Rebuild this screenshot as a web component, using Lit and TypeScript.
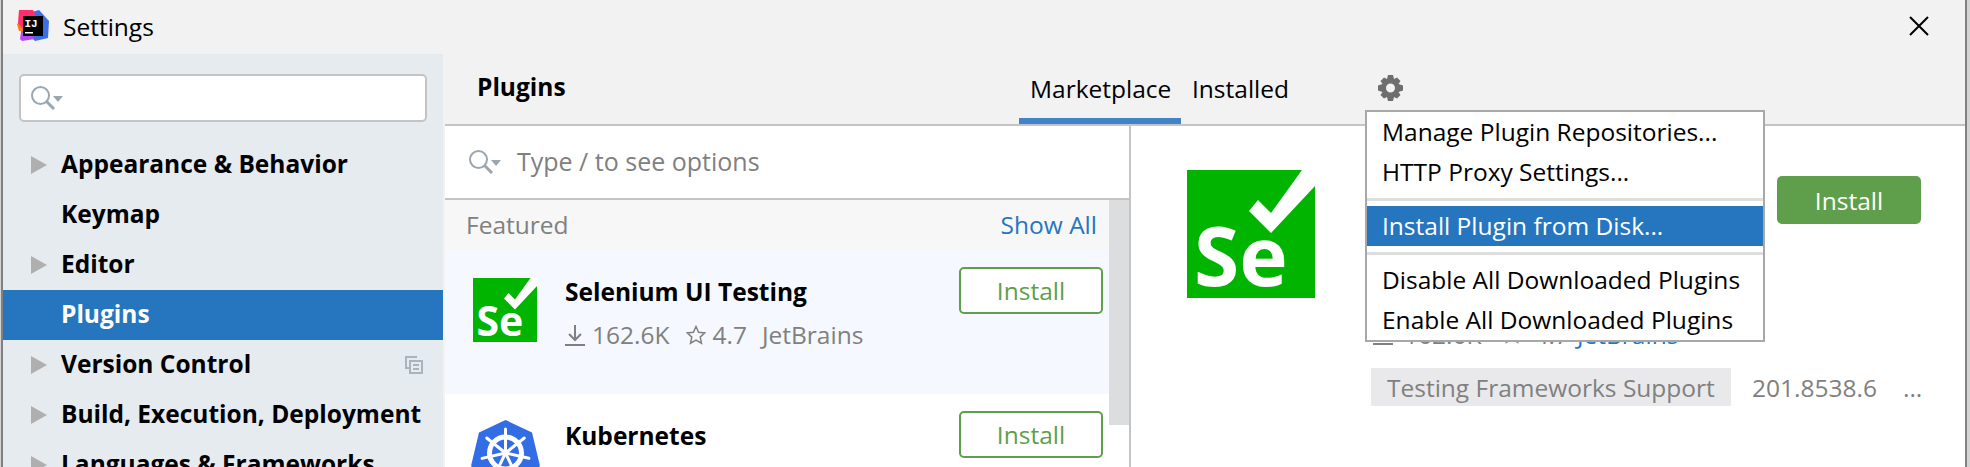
import { LitElement, html, css, svg } from 'lit';
import { customElement } from 'lit/decorators.js';

const seleniumIcon = (size: number) => html`
  <svg width=${size} height=${size} viewBox="0 0 128 128">
    <rect width="128" height="128" fill="#00b400"/>
    <path fill="#fff" d="M115 0h13v16L84 63 62 41l9-11 13 13z"/>
    <text x="7" y="116" font-size="82" font-weight="700" fill="#fff" font-family="Open Sans">Se</text>
  </svg>
`;

const k8sSpokes = [0, 51.4, 102.8, 154.3, 205.7, 257.1, 308.6];

const kubernetesIcon = html`
  <svg width="69" height="67" viewBox="0 0 69 67">
    <path fill="#326de6" d="M34.500 0 61 12.500 69 46 48 67H21L0 46 8 12.500z"/>
    <g fill="none" stroke="#fff">
      <circle cx="34.500" cy="33" r="16" stroke-width="5"/>
      ${k8sSpokes.map(
        (a) => svg`<path stroke-width="3" stroke-linecap="round" d="M34.500 33V9" transform="rotate(${a} 34.500 33)"/>`
      )}
    </g>
    <circle cx="34.500" cy="33" r="3" fill="#fff"/>
  </svg>
`;

const searchIcon = html`
  <svg width="32" height="24" viewBox="0 0 32 24" fill="none">
    <circle cx="9.500" cy="9.500" r="8.500" stroke="#9aa7b0" stroke-width="2"/>
    <path d="m15.500 15.500 7.500 7.500" stroke="#9aa7b0" stroke-width="3"/>
    <path d="M22 10h10l-5 6z" fill="#9aa7b0"/>
  </svg>
`;

const gearIcon = html`
  <svg width="25" height="26" viewBox="0 0 25 26">
    <path fill="#6e6e6e" fill-rule="evenodd" d="M10 0h5l1 4 3-1.500L22.500 6 20.500 9l4.500 1.500v5L20.500 17l2 3-3.500 3.500-3-1.500-1 4h-5l-1-4-3 1.500L2.500 20l2-3L0 15.500v-5L4.500 9l-2-3L6 2.500 9 4zM12.500 8.500a4.500 4.500 0 1 0 0 9 4.500 4.500 0 0 0 0-9z"/>
  </svg>
`;

const downloadIcon = html`
  <svg width="20" height="22" viewBox="0 0 20 22" fill="none" stroke="#808080" stroke-width="2">
    <path d="M10 1v15M4 10l6 6 6-6M0 21h20"/>
  </svg>
`;

const starIcon = html`
  <svg width="20" height="20" viewBox="0 0 20 20" fill="none" stroke="#808080" stroke-width="1.500">
    <path d="m10 1.500 2.600 5.700 6.200.7-4.600 4.200 1.300 6.100L10 15.100l-5.500 3.100 1.300-6.100L1.200 7.900l6.200-.7z"/>
  </svg>
`;

@customElement('app-root')
export class AppRoot extends LitElement {
  static styles = css`
    :host {
      display: block;
      width: 1970px;
      height: 467px;
      overflow: hidden;
      background: #d4d4d4;
      font-family: "Open Sans", "Noto Sans", sans-serif;
      font-size: 24.5px;
      color: #000;
    }
    .window {
      position: relative;
      margin: 0 3px 0 1px;
      height: 467px;
      background: #f2f2f2;
      border-left: 2px solid #808080;
      border-right: 2px solid #808080;
      overflow: hidden;
    }
    .titlebar {
      height: 54px;
      display: flex;
      align-items: center;
      padding: 0 36px 0 14px;
    }
    .logo {
      width: 32px;
      height: 32px;
      margin-right: 14px;
      margin-top: -4px;
    }
    .title {
      flex: 1;
      padding-bottom: 2px;
    }
    .close {
      margin-top: -2px;
    }
    .body {
      display: flex;
      height: 413px;
    }
    .sidebar {
      width: 440px;
      flex: none;
      background: #e6ebf0;
      padding-top: 20px;
      box-sizing: border-box;
    }
    .side-search {
      margin: 0 16px;
      height: 48px;
      box-sizing: border-box;
      background: #fff;
      border: 2px solid #c4c4c4;
      border-radius: 5px;
      display: flex;
      align-items: center;
      padding-left: 10px;
    }
    .tree {
      margin-top: 18px;
    }
    .tree-row {
      height: 50px;
      display: flex;
      align-items: center;
      padding: 0 20px 0 28px;
      font-weight: 700;
      white-space: nowrap;
    }
    .tree-row.selected {
      background: #2675bf;
      color: #fff;
    }
    .arrow {
      width: 0;
      height: 0;
      border-left: 16px solid #afafaf;
      border-top: 9px solid transparent;
      border-bottom: 9px solid transparent;
      margin-right: 14px;
    }
    .no-arrow {
      width: 30px;
    }
    .tree-label {
      flex: 1;
      padding-bottom: 3px;
    }
    .main {
      flex: 1;
      min-width: 0;
      margin-left: 2px;
    }
    .tabs {
      height: 72px;
      box-sizing: border-box;
      border-bottom: 2px solid #c4c4c4;
      display: flex;
      align-items: stretch;
      padding-left: 32px;
      line-height: 32px;
    }
    .heading {
      font-weight: 700;
      width: 542px;
      margin-top: 17px;
    }
    .tab {
      padding: 19px 11px 0;
      box-sizing: border-box;
      white-space: nowrap;
    }
    .tab.active {
      border-bottom: 6px solid #4083c9;
      width: 162px;
      flex: none;
    }
    .gear {
      margin: 21px 0 0 78px;
    }
    .panes {
      display: flex;
      height: 341px;
    }
    .list {
      width: 686px;
      flex: none;
      background: #fff;
      border-right: 2px solid #c4c4c4;
      box-sizing: border-box;
    }
    .list-search {
      height: 74px;
      box-sizing: border-box;
      border-bottom: 2px solid #c4c4c4;
      display: flex;
      align-items: center;
      gap: 16px;
      padding-left: 24px;
      font-size: 25px;
      color: #808080;
    }
    .list-search span {
      padding-bottom: 2px;
    }
    .scroll {
      display: flex;
    }
    .rows {
      flex: 1;
      min-width: 0;
    }
    .thumb {
      width: 20px;
      height: 225px;
      background: #dcdddf;
    }
    .group {
      height: 50px;
      box-sizing: border-box;
      padding: 0 12px 2px 21px;
      background: #f7f7f7;
      display: flex;
      align-items: center;
      justify-content: space-between;
      color: #808080;
    }
    .link {
      color: #2675bf;
    }
    .plugin {
      height: 144px;
      display: flex;
      box-sizing: border-box;
      padding: 17px 6px 0 28px;
      gap: 28px;
    }
    .plugin.active {
      background: #f5f8fe;
    }
    .plugin-icon {
      margin-top: 11px;
      width: 64px;
      flex: none;
    }
    .plugin-icon.k8s {
      margin: 9px 2px 0 -2px;
    }
    .plugin-info {
      flex: 1;
      min-width: 0;
    }
    .plugin-name {
      font-weight: 700;
      line-height: 32px;
      margin-top: 9px;
      white-space: nowrap;
    }
    .meta {
      display: flex;
      align-items: center;
      margin-top: 11px;
      line-height: 32px;
      color: #808080;
      white-space: nowrap;
    }
    .meta .num {
      margin-left: 7px;
    }
    .meta .star {
      margin-left: 17px;
      display: flex;
    }
    .meta .rate {
      margin-left: 6px;
    }
    .meta .vendor {
      margin-left: 15px;
    }
    .outline-btn {
      width: 144px;
      height: 47px;
      flex: none;
      box-sizing: border-box;
      border: 2px solid #5f9e4a;
      border-radius: 5px;
      background: #fff;
      color: #5f9e4a;
      display: flex;
      align-items: center;
      justify-content: center;
    }
    .detail {
      flex: 1;
      background: #fff;
      min-width: 0;
      padding: 44px 0 0 56px;
      box-sizing: border-box;
      display: flex;
    }
    .detail-side {
      width: 128px;
      flex: none;
    }
    .detail-info {
      margin-left: 56px;
      flex: 1;
      min-width: 0;
    }
    .detail-top {
      display: flex;
      justify-content: flex-end;
      padding-right: 44px;
      margin-top: 6px;
    }
    .solid-btn {
      width: 144px;
      height: 48px;
      background: #5f9e4a;
      color: #fff;
      border-radius: 5px;
      display: flex;
      align-items: center;
      justify-content: center;
    }
    .detail-meta {
      display: flex;
      align-items: center;
      margin: 96px 0 0 2px;
      height: 28px;
      color: #808080;
      white-space: nowrap;
    }
    .detail-meta .num {
      margin-left: 11px;
    }
    .detail-meta .star {
      margin-left: 21px;
      display: flex;
    }
    .detail-meta .rate {
      margin-left: 12px;
    }
    .detail-meta .link {
      margin-left: 8px;
    }
    .tag-row {
      display: flex;
      align-items: center;
      margin-top: 20px;
      color: #808080;
      white-space: nowrap;
    }
    .tag {
      width: 360px;
      height: 38px;
      box-sizing: border-box;
      padding-left: 16px;
      background: #e9e9ec;
      display: flex;
      align-items: center;
      margin-right: 21px;
    }
    .more {
      margin-left: 26px;
    }
    .menu {
      position: absolute;
      left: 1362px;
      top: 110px;
      width: 400px;
      box-sizing: border-box;
      border: 2px solid #a8a8a8;
      background: #fff;
    }
    .menu-item {
      height: 40px;
      box-sizing: border-box;
      display: flex;
      align-items: center;
      padding: 0 0 2px 15px;
      white-space: nowrap;
    }
    .menu-item.selected {
      background: #2675bf;
      color: #fff;
    }
    .menu-sep {
      height: 14px;
      display: flex;
      align-items: center;
    }
    .menu-sep::after {
      content: "";
      flex: 1;
      height: 3px;
      background: #dedede;
    }
  `;

  render() {
    return html`
      <div class="window">
        <div class="titlebar">
          <svg class="logo" viewBox="0 0 32 32">
            <path fill="#3b6fe8" d="M15 3l7-2 10 11-1 17-13 3-4-4z"/>
            <path fill="#b74af7" d="M5 16l11 12 2 2-13 2-2-2z"/>
            <path fill="#f97a12" d="M0 15l6-4 2 11H2z"/>
            <path fill="#ff2d6f" d="M2 1h14l4 7L6 20l-5-6z"/>
            <rect x="6" y="7" width="20" height="20" fill="#000"/>
            <text x="7.500" y="18" font-size="11" font-weight="700" fill="#fff" font-family="Liberation Mono">IJ</text>
            <rect x="8" y="23" width="8" height="1.500" fill="#fff"/>
          </svg>
          <span class="title">Settings</span>
          <svg class="close" width="20" height="20" viewBox="0 0 20 20">
            <path d="M1 1l18 18M19 1 1 19" stroke="#000" stroke-width="2"/>
          </svg>
        </div>
        <div class="body">
          <div class="sidebar">
            <div class="side-search">${searchIcon}</div>
            <div class="tree">
              <div class="tree-row"><span class="arrow"></span><span class="tree-label">Appearance &amp; Behavior</span></div>
              <div class="tree-row"><span class="no-arrow"></span><span class="tree-label">Keymap</span></div>
              <div class="tree-row"><span class="arrow"></span><span class="tree-label">Editor</span></div>
              <div class="tree-row selected"><span class="no-arrow"></span><span class="tree-label">Plugins</span></div>
              <div class="tree-row">
                <span class="arrow"></span><span class="tree-label">Version Control</span>
                <svg width="18" height="18" viewBox="0 0 18 18" fill="none" stroke="#aab4bc" stroke-width="2">
                  <path d="M12 1H1v11h3M5 5h12v12H5zM8 9h6M8 13h6"/>
                </svg>
              </div>
              <div class="tree-row"><span class="arrow"></span><span class="tree-label">Build, Execution, Deployment</span></div>
              <div class="tree-row"><span class="arrow"></span><span class="tree-label">Languages &amp; Frameworks</span></div>
            </div>
          </div>
          <div class="main">
            <div class="tabs">
              <div class="heading">Plugins</div>
              <div class="tab active">Marketplace</div>
              <div class="tab">Installed</div>
              <div class="gear">${gearIcon}</div>
            </div>
            <div class="panes">
              <div class="list">
                <div class="list-search">${searchIcon}<span>Type / to see options</span></div>
                <div class="scroll">
                  <div class="rows">
                    <div class="group"><span>Featured</span><span class="link">Show All</span></div>
                    <div class="plugin active">
                      <div class="plugin-icon">${seleniumIcon(64)}</div>
                      <div class="plugin-info">
                        <div class="plugin-name">Selenium UI Testing</div>
                        <div class="meta">
                          ${downloadIcon}
                          <span class="num">162.6K</span>
                          <span class="star">${starIcon}</span>
                          <span class="rate">4.7</span>
                          <span class="vendor">JetBrains</span>
                        </div>
                      </div>
                      <div class="outline-btn">Install</div>
                    </div>
                    <div class="plugin">
                      <div class="plugin-icon k8s">${kubernetesIcon}</div>
                      <div class="plugin-info"><div class="plugin-name">Kubernetes</div></div>
                      <div class="outline-btn">Install</div>
                    </div>
                  </div>
                  <div class="thumb"></div>
                </div>
              </div>
              <div class="detail">
                <div class="detail-side">${seleniumIcon(128)}</div>
                <div class="detail-info">
                  <div class="detail-top"><div class="solid-btn">Install</div></div>
                  <div class="detail-meta">
                    ${downloadIcon}
                    <span class="num">162.6K</span>
                    <span class="star">${starIcon}</span>
                    <span class="rate">4.7</span>
                    <span class="link">JetBrains</span>
                  </div>
                  <div class="tag-row">
                    <span class="tag">Testing Frameworks Support</span>
                    <span>201.8538.6</span>
                    <span class="more">...</span>
                  </div>
                </div>
              </div>
            </div>
          </div>
        </div>
        <div class="menu">
          <div class="menu-item">Manage Plugin Repositories...</div>
          <div class="menu-item">HTTP Proxy Settings...</div>
          <div class="menu-sep"></div>
          <div class="menu-item selected">Install Plugin from Disk...</div>
          <div class="menu-sep"></div>
          <div class="menu-item">Disable All Downloaded Plugins</div>
          <div class="menu-item">Enable All Downloaded Plugins</div>
        </div>
      </div>
    `;
  }
}
